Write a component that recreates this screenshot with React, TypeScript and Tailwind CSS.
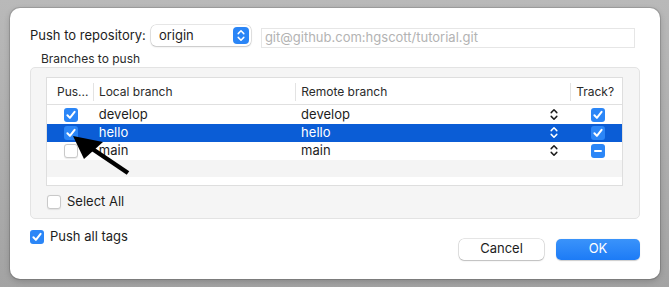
import cn from "clsx"

const FONT = "font-['Inter','Liberation_Sans',sans-serif]"

type Branch = {
  name: string
  remote: string
  push: boolean
  track: "on" | "mixed"
  selected?: boolean
}

const BRANCHES: Branch[] = [
  { name: "develop", remote: "develop", push: true, track: "on" },
  { name: "hello", remote: "hello", push: true, track: "on", selected: true },
  { name: "main", remote: "main", push: false, track: "mixed" },
]

function Checkbox({ state }: { state: "on" | "off" | "mixed" }) {
  if (state === "off") {
    return (
      <span className="block h-[14px] w-[14px] rounded-[3px] border border-[#c9c9c9] bg-white shadow-[0_0.5px_1px_rgba(0,0,0,0.08)]" />
    )
  }
  return (
    <span className="flex h-[14px] w-[14px] items-center justify-center rounded-[3px] bg-[#2b86f7]">
      {state === "on" ? (
        <svg width="14" height="14" viewBox="0 0 14 14" fill="none">
          <path d="M3.4 7.3 L5.9 9.9 L10.6 3.9" stroke="white" strokeWidth="2" strokeLinecap="round" strokeLinejoin="round" />
        </svg>
      ) : (
        <span className="block h-[2px] w-[8px] rounded-full bg-white" />
      )}
    </span>
  )
}

function Stepper({ color }: { color: string }) {
  return (
    <svg width="8" height="13" viewBox="0 0 8 13" fill="none">
      <path d="M1.2 4.6 L4 1.8 L6.8 4.6" stroke={color} strokeWidth="1.5" strokeLinecap="round" strokeLinejoin="round" />
      <path d="M1.2 8.4 L4 11.2 L6.8 8.4" stroke={color} strokeWidth="1.5" strokeLinecap="round" strokeLinejoin="round" />
    </svg>
  )
}

function Row({ b, bg }: { b: Branch; bg: string }) {
  const text = b.selected ? "text-white" : "text-[#1d1d1d]"
  return (
    <div className={cn("flex h-[18px] items-center text-[13px]", bg, text)}>
      <div className="flex w-[47px] justify-center pl-[1px]">
        <Checkbox state={b.push ? "on" : "off"} />
      </div>
      <div className="w-[203px] pl-[5px]">{b.name}</div>
      <div className="flex w-[276px] items-center justify-between pl-[5px] pr-[13px]">
        <span>{b.remote}</span>
        <Stepper color={b.selected ? "#ffffff" : "#1d1d1d"} />
      </div>
      <div className="flex w-[51px] justify-center pl-[2px]">
        <Checkbox state={b.track} />
      </div>
    </div>
  )
}

export default function App() {
  return (
    <div className={cn("h-[287px] w-[669px] bg-gradient-to-b from-[#b9b9b9] to-[#a3a3a3] pl-[10px] pt-[8px]", FONT)}>
      <div className="flex h-[271px] w-[650px] flex-col rounded-[10px] bg-white px-[20px] pt-[17px] shadow-[0_0_0_1px_rgba(0,0,0,0.12),0_2px_6px_rgba(0,0,0,0.2)]">
        <div className="flex h-[21px] items-center">
          <span className="text-[13px] text-[#1d1d1d]">Push to repository:</span>
          <div className="ml-[5px] flex h-[21px] w-[100px] items-center justify-between rounded-[5px] bg-white pl-[8px] pr-[2px] text-[13px] text-[#1d1d1d] shadow-[0_0_0_0.5px_rgba(0,0,0,0.18),0_1px_2px_rgba(0,0,0,0.15)]">
            <span>origin</span>
            <span className="flex h-[17px] w-[16px] items-center justify-center rounded-[4px] bg-[#2a85f6]">
              <Stepper color="#ffffff" />
            </span>
          </div>
          <div className="ml-[10px] mt-[5px] flex h-[20px] w-[374px] items-center border border-[#e6e6e6] pl-[3px] text-[13px] text-[#b3b3b3]">
            git@github.com:hgscott/tutorial.git
          </div>
        </div>

        <div className="mt-[5px] pl-[11px] text-[12px] leading-[16px] text-[#2a2a2a]">Branches to push</div>

        <div className="h-[152px] w-[610px] rounded-[5px] border border-[#e3e3e3] bg-[#f5f5f5] pl-[15px] pt-[9px]">
          <div className="relative h-[109px] w-[577px] border border-[#dedede] bg-white">
            <div className="flex h-[27px] items-center border-b border-[#e0e0e0] pt-[2px] text-[12px] text-[#2a2a2a]">
              <div className="w-[47px] border-r border-[#e3e3e3] pl-[10px]">Pus...</div>
              <div className="w-[203px] border-r border-[#e3e3e3] pl-[5px]">Local branch</div>
              <div className="w-[276px] border-r border-[#e3e3e3] pl-[5px]">Remote branch</div>
              <div className="w-[51px] pl-[5px]">Track?</div>
            </div>
            <div className="pt-[0.5px]">
              <Row b={BRANCHES[0]} bg="bg-white" />
              <Row b={BRANCHES[1]} bg="bg-[#0b5dd6]" />
              <Row b={BRANCHES[2]} bg="bg-white" />
              <div className="h-[17px] bg-[#f4f4f4]" />
            </div>
            <svg className="absolute left-0 top-0" width="120" height="108" viewBox="0 0 120 108" fill="none">
              <path d="M81 95 L38 66" stroke="black" strokeWidth="4.5" strokeLinecap="butt" />
              <path d="M26 58 L56 64 L37 81 Z" fill="black" />
            </svg>
          </div>
          <div className="mt-[6px] flex items-center gap-[6px] pl-[1px] text-[13px] text-[#1d1d1d]">
            <Checkbox state="off" />
            <span>Select All</span>
          </div>
        </div>

        <div className="mt-[8px] flex items-center gap-[6px] text-[13px] text-[#1d1d1d]">
          <Checkbox state="on" />
          <span>Push all tags</span>
        </div>

        <div className="mt-[-8px] flex justify-end gap-[12px]">
          <button className="h-[21px] w-[85px] rounded-[5px] bg-white text-[13px] text-[#1d1d1d] shadow-[0_0_0_0.5px_rgba(0,0,0,0.2),0_1px_1.5px_rgba(0,0,0,0.18)]">
            Cancel
          </button>
          <button className="h-[21px] w-[84px] rounded-[5px] bg-gradient-to-b from-[#3a93fa] to-[#1c7bf6] text-[13px] text-white shadow-[0_0.5px_1px_rgba(0,0,0,0.2)]">
            OK
          </button>
        </div>
      </div>
    </div>
  )
}
